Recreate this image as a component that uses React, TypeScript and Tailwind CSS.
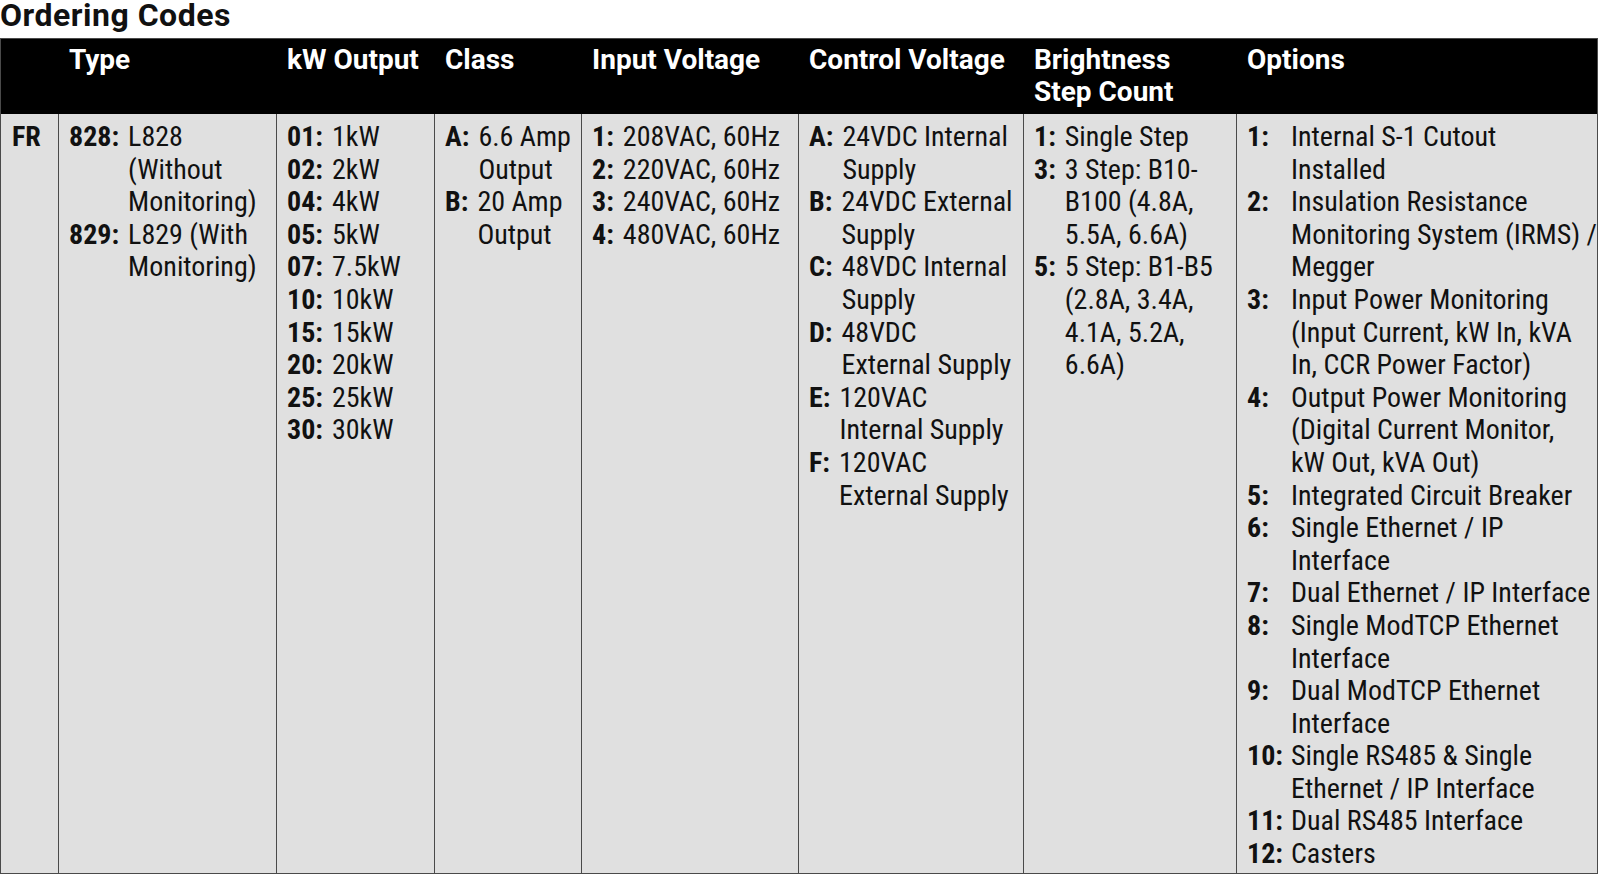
import React from 'react';

type Item = { code: string; lines: string[] };
type Column = { title: string[]; width: string; items: Item[]; labelWidth?: string };

const columns: Column[] = [
  { title: [''], width: 'w-[57px]', items: [] },
  {
    title: ['Type'],
    width: 'w-[218px]',
    items: [
      { code: '828:', lines: ['L828', '(Without', 'Monitoring)'] },
      { code: '829:', lines: ['L829 (With', 'Monitoring)'] },
    ],
  },
  {
    title: ['kW Output'],
    width: 'w-[158px]',
    items: [
      { code: '01:', lines: ['1kW'] },
      { code: '02:', lines: ['2kW'] },
      { code: '04:', lines: ['4kW'] },
      { code: '05:', lines: ['5kW'] },
      { code: '07:', lines: ['7.5kW'] },
      { code: '10:', lines: ['10kW'] },
      { code: '15:', lines: ['15kW'] },
      { code: '20:', lines: ['20kW'] },
      { code: '25:', lines: ['25kW'] },
      { code: '30:', lines: ['30kW'] },
    ],
  },
  {
    title: ['Class'],
    width: 'w-[147px]',
    items: [
      { code: 'A:', lines: ['6.6 Amp', 'Output'] },
      { code: 'B:', lines: ['20 Amp', 'Output'] },
    ],
  },
  {
    title: ['Input Voltage'],
    width: 'w-[217px]',
    items: [
      { code: '1:', lines: ['208VAC, 60Hz'] },
      { code: '2:', lines: ['220VAC, 60Hz'] },
      { code: '3:', lines: ['240VAC, 60Hz'] },
      { code: '4:', lines: ['480VAC, 60Hz'] },
    ],
  },
  {
    title: ['Control Voltage'],
    width: 'w-[225px]',
    items: [
      { code: 'A:', lines: ['24VDC Internal', 'Supply'] },
      { code: 'B:', lines: ['24VDC External', 'Supply'] },
      { code: 'C:', lines: ['48VDC Internal', 'Supply'] },
      { code: 'D:', lines: ['48VDC', 'External Supply'] },
      { code: 'E:', lines: ['120VAC', 'Internal Supply'] },
      { code: 'F:', lines: ['120VAC', 'External Supply'] },
    ],
  },
  {
    title: ['Brightness', 'Step Count'],
    width: 'w-[213px]',
    items: [
      { code: '1:', lines: ['Single Step'] },
      { code: '3:', lines: ['3 Step: B10-', 'B100 (4.8A,', '5.5A, 6.6A)'] },
      { code: '5:', lines: ['5 Step: B1-B5', '(2.8A, 3.4A,', '4.1A, 5.2A,', '6.6A)'] },
    ],
  },
  {
    title: ['Options'],
    width: 'flex-1',
    labelWidth: 'w-[44px]',
    items: [
      { code: '1:', lines: ['Internal S-1 Cutout', 'Installed'] },
      { code: '2:', lines: ['Insulation Resistance', 'Monitoring System (IRMS) /', 'Megger'] },
      { code: '3:', lines: ['Input Power Monitoring', '(Input Current, kW In, kVA', 'In, CCR Power Factor)'] },
      { code: '4:', lines: ['Output Power Monitoring', '(Digital Current Monitor,', 'kW Out, kVA Out)'] },
      { code: '5:', lines: ['Integrated Circuit Breaker'] },
      { code: '6:', lines: ['Single Ethernet / IP', 'Interface'] },
      { code: '7:', lines: ['Dual Ethernet / IP Interface'] },
      { code: '8:', lines: ['Single ModTCP Ethernet', 'Interface'] },
      { code: '9:', lines: ['Dual ModTCP Ethernet', 'Interface'] },
      { code: '10:', lines: ['Single RS485 & Single', 'Ethernet / IP Interface'] },
      { code: '11:', lines: ['Dual RS485 Interface'] },
      { code: '12:', lines: ['Casters'] },
    ],
  },
];

// Roboto's width axis stands in for a condensed face
const font = "font-['Roboto','Roboto_Condensed',sans-serif] [font-stretch:75%]";

export default function App() {
  return (
    <div className={`w-[1600px] h-[876px] bg-white text-[#111] ${font}`}>
      <h1 className="h-[38px] text-[32px] leading-[31px] font-bold tracking-[0.5px] [font-stretch:100%]">
        Ordering Codes
      </h1>
      <div className="w-[1598px] border border-[#4a4a4a]">
        {/* Header */}
        <div className="flex bg-black text-white h-[75px] text-[28px] leading-[32px] font-bold [font-stretch:92%]">
          {columns.map((col, i) => (
            <div key={i} className={`${col.width} shrink-0 pl-[11px] pt-[5px]`}>
              {col.title.map((t) => (
                <div key={t} className="whitespace-nowrap">{t}</div>
              ))}
            </div>
          ))}
        </div>
        {/* Body */}
        <div className="flex bg-[#e0e0e0] min-h-[759px] text-[28px] leading-[32.6px]">
          {columns.map((col, i) => (
            <div
              key={i}
              className={`${col.width} shrink-0 pl-[10px] pt-[7px] ${i > 0 ? 'border-l border-[#4a4a4a]' : ''}`}
            >
              {i === 0 && <div className="font-bold [font-stretch:85%] pl-[1px]">FR</div>}
              {col.items.map((item) => (
                <div key={item.code} className="flex">
                  <span className={`font-bold [font-stretch:85%] shrink-0 ${col.labelWidth ?? 'mr-[9px]'}`}>
                    {item.code}
                  </span>
                  <div>
                    {item.lines.map((line, j) => (
                      <div key={j} className="whitespace-nowrap">{line}</div>
                    ))}
                  </div>
                </div>
              ))}
            </div>
          ))}
        </div>
      </div>
    </div>
  );
}
